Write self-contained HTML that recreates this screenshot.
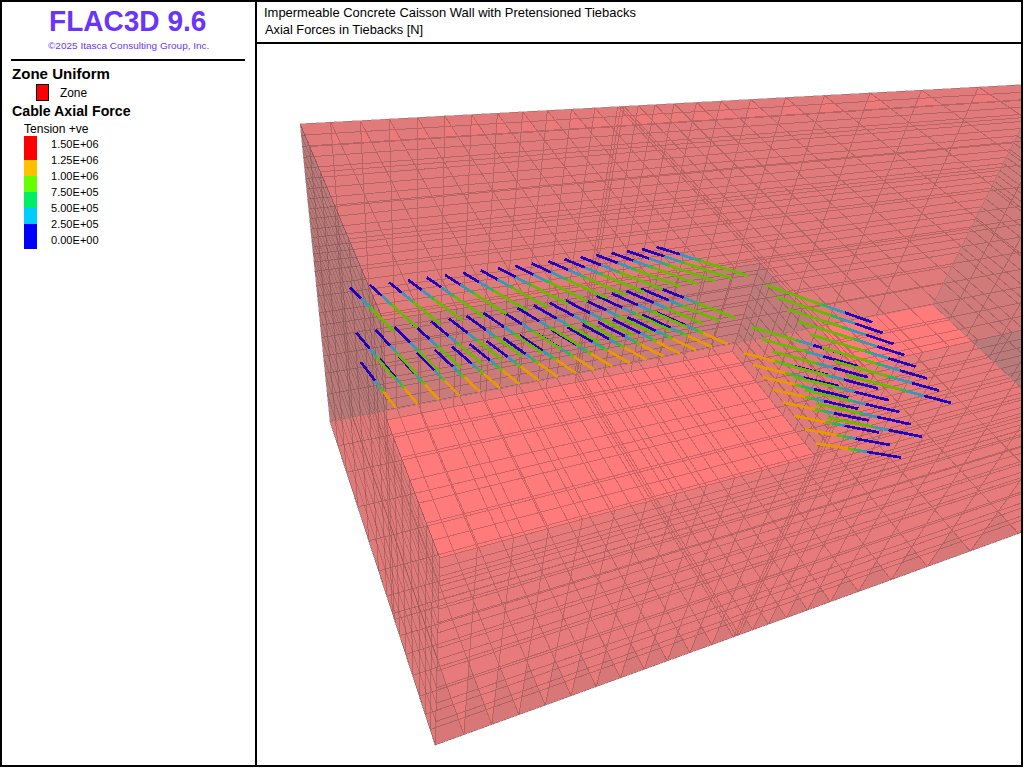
<!DOCTYPE html>
<html><head><meta charset="utf-8">
<style>
html,body{margin:0;padding:0;background:#fff;}
body{width:1024px;height:768px;position:relative;overflow:hidden;font-family:"Liberation Sans",sans-serif;}
.abs{position:absolute;white-space:nowrap;}
#frame{position:absolute;left:0;top:0;width:1019px;height:763px;border:2px solid #000;}
#vdiv{position:absolute;left:255px;top:0;width:2px;height:767px;background:#000;}
#hdiv{position:absolute;left:255px;top:42px;width:768px;height:2px;background:#000;}
#sep{position:absolute;left:11px;top:59px;width:234px;height:2px;background:#000;}
.t1{font-size:29px;font-weight:bold;color:#6a3cf0;}
.cp{font-size:10.5px;color:#6a3cf0;}
.h{font-size:14px;font-weight:bold;color:#000;}
.s{font-size:12px;color:#000;}
.lab{font-size:11.5px;color:#000;}
#view{position:absolute;left:0;top:0;}
</style></head><body>
<svg id="view" width="1024" height="768" viewBox="0 0 1024 768">
<defs><clipPath id="vp"><rect x="257" y="44" width="764" height="721"/></clipPath></defs>
<defs>
<clipPath id="e0"><polygon points="330.00,421.49 932.74,304.65 1043.16,83.50 300.09,123.85"/></clipPath>
<clipPath id="e1"><polygon points="435.19,745.17 1132.68,492.27 932.74,304.65 330.00,421.49"/></clipPath>
<clipPath id="e2"><polygon points="1132.68,492.27 932.74,304.65 1043.16,83.50 1328.77,261.65"/></clipPath>
</defs>
<g clip-path="url(#vp)">
<g clip-path="url(#e0)" shape-rendering="crispEdges">
<polygon points="383.01,320.06 1220.62,194.19 1043.16,83.50 300.09,123.85" fill="rgb(225,122,122)"/>
<polygon points="855.10,367.43 1328.77,261.65 1220.62,194.19 760.39,263.35" fill="rgb(225,122,122)"/>
<polygon points="435.19,745.17 330.00,421.49 300.09,123.85 383.01,320.06 386.80,420.03 439.68,557.94" fill="rgb(186,122,122)"/>
<polygon points="435.19,745.17 1132.68,492.27 1328.77,261.65 855.10,367.43 815.11,456.06 439.68,557.94" fill="rgb(201,122,122)"/>
<polygon points="439.68,557.94 815.11,456.06 732.35,351.46 386.80,420.03" fill="rgb(225,122,122)"/>
<polygon points="386.80,420.03 732.35,351.46 760.39,263.35 383.01,320.06" fill="rgb(201,122,122)"/>
<polygon points="815.11,456.06 732.35,351.46 760.39,263.35 855.10,367.43" fill="rgb(193,122,122)"/>
</g>
<g clip-path="url(#e1)" shape-rendering="crispEdges">
<polygon points="383.01,320.06 1220.62,194.19 1043.16,83.50 300.09,123.85" fill="rgb(255,122,122)"/>
<polygon points="855.10,367.43 1328.77,261.65 1220.62,194.19 760.39,263.35" fill="rgb(255,122,122)"/>
<polygon points="435.19,745.17 330.00,421.49 300.09,123.85 383.01,320.06 386.80,420.03 439.68,557.94" fill="rgb(223,122,122)"/>
<polygon points="435.19,745.17 1132.68,492.27 1328.77,261.65 855.10,367.43 815.11,456.06 439.68,557.94" fill="rgb(231,122,122)"/>
<polygon points="439.68,557.94 815.11,456.06 732.35,351.46 386.80,420.03" fill="rgb(255,122,122)"/>
<polygon points="386.80,420.03 732.35,351.46 760.39,263.35 383.01,320.06" fill="rgb(231,122,122)"/>
<polygon points="815.11,456.06 732.35,351.46 760.39,263.35 855.10,367.43" fill="rgb(223,122,122)"/>
</g>
<g clip-path="url(#e2)" shape-rendering="crispEdges">
<polygon points="383.01,320.06 1220.62,194.19 1043.16,83.50 300.09,123.85" fill="rgb(208,122,122)"/>
<polygon points="855.10,367.43 1328.77,261.65 1220.62,194.19 760.39,263.35" fill="rgb(208,122,122)"/>
<polygon points="435.19,745.17 330.00,421.49 300.09,123.85 383.01,320.06 386.80,420.03 439.68,557.94" fill="rgb(176,122,122)"/>
<polygon points="435.19,745.17 1132.68,492.27 1328.77,261.65 855.10,367.43 815.11,456.06 439.68,557.94" fill="rgb(184,122,122)"/>
<polygon points="439.68,557.94 815.11,456.06 732.35,351.46 386.80,420.03" fill="rgb(208,122,122)"/>
<polygon points="386.80,420.03 732.35,351.46 760.39,263.35 383.01,320.06" fill="rgb(184,122,122)"/>
<polygon points="815.11,456.06 732.35,351.46 760.39,263.35 855.10,367.43" fill="rgb(176,122,122)"/>
</g>
<path d="M330.66,122.19L332.38,145.07L341.11,144.51ZM360.37,120.58L361.51,143.18L371.64,142.52ZM389.29,119.01L389.87,141.33L401.31,140.59ZM417.42,117.48L417.48,139.54L430.15,138.72ZM444.80,115.99L444.37,137.79L458.20,136.89ZM471.45,114.55L470.56,136.09L485.49,135.12ZM497.42,113.13L496.09,134.43L512.05,133.39ZM522.73,111.76L520.97,132.81L537.92,131.71ZM547.39,110.42L545.23,131.23L563.10,130.07ZM571.44,109.12L568.90,129.69L587.64,128.47ZM594.89,107.84L592.00,128.19L611.57,126.92ZM617.77,106.60L614.54,126.72L634.88,125.40ZM620.88,106.43L617.60,126.53L638.05,125.20ZM623.98,106.26L620.65,126.33L641.20,124.99ZM638.30,105.48L634.77,125.41L655.79,124.04ZM655.07,104.57L651.30,124.33L672.85,122.93ZM674.14,103.54L670.10,123.11L692.25,121.67ZM696.62,102.32L692.28,121.67L715.11,120.18ZM721.03,100.99L716.36,120.10L739.91,118.57ZM750.76,99.38L745.72,118.19L770.08,116.61ZM785.82,97.47L780.35,115.94L805.63,114.30ZM824.41,95.38L818.50,113.46L844.73,111.76ZM870.11,92.90L863.71,110.52L890.96,108.75ZM921.62,90.10L914.71,107.20L943.00,105.37ZM978.51,87.01L971.10,103.54L1000.37,101.63ZM1043.16,83.50L1035.24,99.37L1065.45,97.40Z" fill="rgb(236,122,122)" shape-rendering="crispEdges"/>
<path d="M435.19,745.17L437.27,658.61L463.90,734.76ZM463.90,734.76L469.00,663.72L491.80,724.64ZM491.80,724.64L498.85,664.34L518.95,714.80ZM518.95,714.80L527.28,662.42L545.36,705.23ZM545.36,705.23L554.58,658.91L571.07,695.90ZM571.07,695.90L580.89,654.42L596.10,686.83ZM596.10,686.83L606.33,649.24L620.48,677.99ZM620.48,677.99L630.99,643.65L644.24,669.37ZM644.24,669.37L654.92,637.78L667.39,660.98ZM667.39,660.98L678.17,631.72L689.97,652.79ZM689.97,652.79L700.79,625.56L711.99,644.81ZM711.99,644.81L722.80,619.36L733.47,637.02ZM733.47,637.02L734.98,633.66L736.38,635.96ZM736.38,635.96L737.90,632.63L739.29,634.91ZM739.29,634.91L746.28,619.67L752.74,630.03ZM752.74,630.03L760.99,612.63L768.47,624.33ZM768.47,624.33L777.97,605.07L786.37,617.84ZM786.37,617.84L797.69,595.80L807.48,610.19ZM807.48,610.19L819.92,587.03L830.39,601.88ZM830.39,601.88L845.71,574.65L858.29,591.76ZM858.29,591.76L876.58,560.91L891.19,579.83ZM891.19,579.83L911.62,547.27L927.42,566.70ZM927.42,566.70L951.90,529.82L970.30,551.15ZM970.30,551.15L998.28,511.52L1018.64,533.62ZM1018.64,533.62L1049.96,491.92L1072.02,514.27ZM1072.02,514.27L1108.05,469.16L1132.68,492.27Z" fill="rgb(216,119,119)" shape-rendering="crispEdges" clip-path="url(#e1)"/>
<path d="M330.00,421.49L300.09,123.85M352.79,417.08L330.66,122.19M375.09,412.75L360.37,120.58M396.93,408.52L389.29,119.01M418.32,404.37L417.42,117.48M439.27,400.31L444.80,115.99M459.80,396.33L471.45,114.55M479.92,392.43L497.42,113.13M499.64,388.61L522.73,111.76M518.97,384.86L547.39,110.42M537.94,381.18L571.44,109.12M556.53,377.58L594.89,107.84M574.77,374.04L617.77,106.60M577.26,373.56L620.88,106.43M579.74,373.08L623.98,106.26M591.22,370.85L638.30,105.48M604.72,368.24L655.07,104.57M620.13,365.25L674.14,103.54M638.39,361.71L696.62,102.32M658.32,357.84L721.03,100.99M682.76,353.11L750.76,99.38M711.81,347.48L785.82,97.47M744.06,341.22L824.41,95.38M782.65,333.74L870.11,92.90M826.66,325.21L921.62,90.10M875.92,315.66L978.51,87.01M932.74,304.65L1043.16,83.50M330.00,421.49L932.74,304.65M327.27,394.25L943.69,282.72M325.17,373.38L951.95,266.18M323.42,356.01L958.75,252.56M321.55,337.41L965.94,238.15M320.33,325.21L970.62,228.78M319.07,312.70L975.38,219.24M317.41,296.15L981.63,206.73M316.33,285.45L985.63,198.71M314.91,271.26L990.90,188.16M313.98,262.04L994.31,181.34M313.17,254.00L997.26,175.43M312.49,247.21L999.74,170.46M311.52,237.56L1003.25,163.43M310.67,229.15L1006.29,157.34M309.63,218.74L1010.04,149.84M308.64,208.94L1013.54,142.82M307.64,198.97L1017.09,135.72M306.62,188.82L1020.68,128.53M305.58,178.48L1024.31,121.25M304.52,167.95L1027.99,113.88M303.45,157.23L1031.71,106.43M302.35,146.31L1035.48,98.88M301.23,135.19L1039.30,91.24M300.09,123.85L1043.16,83.50M435.19,745.17L1132.68,492.27M430.13,729.59L1123.84,483.97M425.16,714.30L1115.09,475.76M419.27,696.17L1104.62,465.94M412.51,675.37L1092.49,454.55M405.67,654.33L1080.07,442.90M399.64,635.78L1069.02,432.53M394.35,619.49L1059.21,423.33M392.40,613.49L1055.58,419.92M386.74,596.06L1044.96,409.95M378.54,570.85L1029.42,395.37M368.79,540.84L1010.63,377.74M357.75,506.87L988.99,357.43M346.53,472.35L966.58,336.40M337.91,445.82L949.05,319.95M330.00,421.49L932.74,304.65M435.19,745.17L330.00,421.49M463.90,734.76L352.79,417.08M491.80,724.64L375.09,412.75M518.95,714.80L396.93,408.52M545.36,705.23L418.32,404.37M571.07,695.90L439.27,400.31M596.10,686.83L459.80,396.33M620.48,677.99L479.92,392.43M644.24,669.37L499.64,388.61M667.39,660.98L518.97,384.86M689.97,652.79L537.94,381.18M711.99,644.81L556.53,377.58M733.47,637.02L574.77,374.04M736.38,635.96L577.26,373.56M739.29,634.91L579.74,373.08M752.74,630.03L591.22,370.85M768.47,624.33L604.72,368.24M786.37,617.84L620.13,365.25M807.48,610.19L638.39,361.71M830.39,601.88L658.32,357.84M858.29,591.76L682.76,353.11M891.19,579.83L711.81,347.48M927.42,566.70L744.06,341.22M970.30,551.15L782.65,333.74M1018.64,533.62L826.66,325.21M1072.02,514.27L875.92,315.66M1132.68,492.27L932.74,304.65M1132.68,492.27L932.74,304.65M1151.30,470.38L943.69,282.72M1165.46,453.72L951.95,266.18M1177.19,439.92L958.75,252.56M1189.69,425.23L965.94,238.15M1197.85,415.62L970.62,228.78M1206.20,405.81L975.38,219.24M1217.19,392.88L981.63,206.73M1224.27,384.55L985.63,198.71M1233.62,373.55L990.90,188.16M1239.69,366.42L994.31,181.34M1244.96,360.22L997.26,175.43M1249.41,354.99L999.74,170.46M1255.71,347.57L1003.25,163.43M1261.19,341.13L1006.29,157.34M1267.95,333.17L1010.04,149.84M1274.30,325.70L1013.54,142.82M1280.75,318.12L1017.09,135.72M1287.30,310.42L1020.68,128.53M1293.94,302.60L1024.31,121.25M1300.69,294.67L1027.99,113.88M1307.55,286.60L1031.71,106.43M1314.51,278.42L1035.48,98.88M1321.58,270.10L1039.30,91.24M1328.77,261.65L1043.16,83.50M1132.68,492.27L1328.77,261.65M1123.84,483.97L1315.54,253.40M1115.09,475.76L1302.52,245.27M1104.62,465.94L1287.00,235.59M1092.49,454.55L1269.12,224.44M1080.07,442.90L1250.93,213.10M1069.02,432.53L1234.82,203.05M1059.21,423.33L1220.62,194.19M1055.58,419.92L1215.37,190.91M1044.96,409.95L1200.08,181.37M1029.42,395.37L1177.84,167.51M1010.63,377.74L1151.19,150.88M988.99,357.43L1120.77,131.91M966.58,336.40L1089.60,112.47M949.05,319.95L1065.45,97.40M932.74,304.65L1043.16,83.50M855.10,367.43L1328.77,261.65M843.18,354.33L1315.54,253.40M831.53,341.52L1302.52,245.27M817.77,326.41L1287.00,235.59M802.09,309.17L1269.12,224.44M786.31,291.83L1250.93,213.10M772.48,276.63L1234.82,203.05M383.01,320.06L1220.62,194.19M380.33,313.70L1215.37,190.91M372.59,295.40L1200.08,181.37M361.57,269.32L1177.84,167.51M348.71,238.88L1151.19,150.88M334.46,205.18L1120.77,131.91M320.33,171.73L1089.60,112.47M309.68,146.55L1065.45,97.40M300.09,123.85L1043.16,83.50M383.01,320.06L300.09,123.85M420.70,314.39L330.66,122.19M457.04,308.93L360.37,120.58M492.13,303.66L389.29,119.01M526.01,298.57L417.42,117.48M558.76,293.65L444.80,115.99M590.42,288.89L471.45,114.55M621.05,284.29L497.42,113.13M650.71,279.83L522.73,111.76M679.42,275.52L547.39,110.42M707.25,271.33L571.44,109.12M734.23,267.28L594.89,107.84M760.39,263.35L617.77,106.60M858.87,366.59L620.88,106.43M862.62,365.75L623.98,106.26M879.90,361.89L638.30,105.48M900.00,357.41L655.07,104.57M922.68,352.34L674.14,103.54M949.21,346.42L696.62,102.32M977.71,340.05L721.03,100.99M1012.05,332.38L750.76,99.38M1052.01,323.46L785.82,97.47M1095.35,313.78L824.41,95.38M1145.80,302.51L870.11,92.90M1201.57,290.05L921.62,90.10M1261.86,276.59L978.51,87.01M1328.77,261.65L1043.16,83.50M435.19,745.17L439.68,557.94M430.13,729.59L432.94,540.39M425.16,714.30L426.39,523.28M419.27,696.17L418.68,503.17M412.51,675.37L409.91,480.31M405.67,654.33L401.14,457.42M399.64,635.78L393.47,437.43M394.35,619.49L383.01,320.06M392.40,613.49L380.33,313.70M386.74,596.06L372.59,295.40M378.54,570.85L361.57,269.32M368.79,540.84L348.71,238.88M357.75,506.87L334.46,205.18M346.53,472.35L320.33,171.73M337.91,445.82L309.68,146.55M330.00,421.49L300.09,123.85M435.19,745.17L1132.68,492.27M435.76,721.63L1151.30,470.38M436.20,703.28L1165.46,453.72M436.57,687.78L1177.19,439.92M436.97,670.98L1189.69,425.23M437.24,659.82L1197.85,415.62M437.51,648.27L1206.20,405.81M437.88,632.83L1217.19,392.88M438.12,622.74L1224.27,384.55M438.45,609.24L1233.62,373.55M438.66,600.38L1239.69,366.42M438.85,592.61L1244.96,360.22M439.00,586.00L1249.41,354.99M439.23,576.56L1255.71,347.57M439.43,568.27L1261.19,341.13M439.68,557.94L1267.95,333.17M819.19,447.03L1274.30,325.70M823.35,437.81L1280.75,318.12M827.60,428.39L1287.30,310.42M831.94,418.77L1293.94,302.60M836.37,408.95L1300.69,294.67M840.90,398.91L1307.55,286.60M845.53,388.65L1314.51,278.42M850.26,378.16L1321.58,270.10M855.10,367.43L1328.77,261.65M435.19,745.17L439.68,557.94M463.90,734.76L477.33,547.72M491.80,724.64L513.61,537.88M518.95,714.80L548.61,528.38M545.36,705.23L582.38,519.22M571.07,695.90L614.98,510.37M596.10,686.83L646.47,501.82M620.48,677.99L676.92,493.56M644.24,669.37L706.38,485.57M667.39,660.98L734.87,477.83M689.97,652.79L762.47,470.35M711.99,644.81L789.21,463.09M733.47,637.02L855.10,367.43M736.38,635.96L858.87,366.59M739.29,634.91L862.62,365.75M752.74,630.03L879.90,361.89M768.47,624.33L900.00,357.41M786.37,617.84L922.68,352.34M807.48,610.19L949.21,346.42M830.39,601.88L977.71,340.05M858.29,591.76L1012.05,332.38M891.19,579.83L1052.01,323.46M927.42,566.70L1095.35,313.78M970.30,551.15L1145.80,302.51M1018.64,533.62L1201.57,290.05M1072.02,514.27L1261.86,276.59M1132.68,492.27L1328.77,261.65M439.68,557.94L815.11,456.06M432.94,540.39L804.79,443.01M426.39,523.28L794.67,430.23M418.68,503.17L782.70,415.09M409.91,480.31L769.00,397.78M401.14,457.42L755.17,380.30M393.47,437.43L743.01,364.92M386.80,420.03L732.35,351.46M439.68,557.94L386.80,420.03M477.33,547.72L420.75,413.29M513.61,537.88L453.60,406.77M548.61,528.38L485.43,400.45M582.38,519.22L516.27,394.33M614.98,510.37L546.17,388.40M646.47,501.82L575.17,382.65M676.92,493.56L603.31,377.06M706.38,485.57L630.63,371.64M734.87,477.83L657.15,366.38M762.47,470.35L682.93,361.26M789.21,463.09L707.99,356.29M815.11,456.06L732.35,351.46M386.80,420.03L732.35,351.46M386.42,409.91L735.24,342.39M386.02,399.56L738.18,333.16M385.62,388.98L741.17,323.75M385.21,378.15L744.22,314.17M384.79,367.08L747.33,304.39M384.36,355.74L750.50,294.43M383.93,344.13L753.73,284.27M383.48,332.24L757.03,273.91M383.01,320.06L760.39,263.35M386.80,420.03L383.01,320.06M420.75,413.29L420.70,314.39M453.60,406.77L457.04,308.93M485.43,400.45L492.13,303.66M516.27,394.33L526.01,298.57M546.17,388.40L558.76,293.65M575.17,382.65L590.42,288.89M603.31,377.06L621.05,284.29M630.63,371.64L650.71,279.83M657.15,366.38L679.42,275.52M682.93,361.26L707.25,271.33M707.99,356.29L734.23,267.28M732.35,351.46L760.39,263.35M815.11,456.06L732.35,351.46M819.19,447.03L735.24,342.39M823.35,437.81L738.18,333.16M827.60,428.39L741.17,323.75M831.94,418.77L744.22,314.17M836.37,408.95L747.33,304.39M840.90,398.91L750.50,294.43M845.53,388.65L753.73,284.27M850.26,378.16L757.03,273.91M855.10,367.43L760.39,263.35M815.11,456.06L855.10,367.43M804.79,443.01L843.18,354.33M794.67,430.23L831.53,341.52M782.70,415.09L817.77,326.41M769.00,397.78L802.09,309.17M755.17,380.30L786.31,291.83M743.01,364.92L772.48,276.63M732.35,351.46L760.39,263.35" stroke="rgb(70,40,40)" stroke-opacity="0.27" stroke-width="1" fill="none" shape-rendering="crispEdges"/><path d="M435.19,745.17L330.00,421.49M435.76,721.63L327.27,394.25M436.20,703.28L325.17,373.38M436.57,687.78L323.42,356.01M436.97,670.98L321.55,337.41M437.24,659.82L320.33,325.21M437.51,648.27L319.07,312.70M437.88,632.83L317.41,296.15M438.12,622.74L316.33,285.45M438.45,609.24L314.91,271.26M438.66,600.38L313.98,262.04M438.85,592.61L313.17,254.00M439.00,586.00L312.49,247.21M439.23,576.56L311.52,237.56M439.43,568.27L310.67,229.15M439.68,557.94L309.63,218.74M386.42,409.91L308.64,208.94M386.02,399.56L307.64,198.97M385.62,388.98L306.62,188.82M385.21,378.15L305.58,178.48M384.79,367.08L304.52,167.95M384.36,355.74L303.45,157.23M383.93,344.13L302.35,146.31M383.48,332.24L301.23,135.19M383.01,320.06L300.09,123.85" stroke="rgb(70,40,40)" stroke-opacity="0.2" stroke-width="1" fill="none" shape-rendering="crispEdges"/>
<path d="M350.19,287.59L360.95,298.41M356.35,332.79L369.82,348.90M360.88,362.10L375.10,380.74M369.89,284.98L381.60,295.55M375.53,329.83L390.12,345.59M379.78,358.91L395.15,377.16M389.22,282.41L401.85,292.75M394.37,326.92L410.03,342.35M398.36,355.78L414.81,373.65M408.20,279.89L421.71,290.00M412.87,324.07L429.56,339.16M416.60,352.70L434.11,370.20M426.84,277.42L441.19,287.30M431.04,321.26L448.73,336.04M434.53,349.68L453.05,366.82M445.14,274.99L460.30,284.66M448.90,318.50L467.54,332.97M452.15,346.71L471.64,363.50M463.12,272.61L479.06,282.06M466.44,315.80L486.01,329.96M469.46,343.79L489.89,360.24M480.79,270.26L497.48,279.51M483.69,313.13L504.14,327.00M486.49,340.92L507.81,357.04M498.15,267.96L515.55,277.01M500.64,310.52L521.94,324.10M503.22,338.10L525.42,353.89M515.20,265.70L533.30,274.55M517.31,307.94L539.42,321.25M519.68,335.33L542.71,350.81M531.97,263.47L550.73,272.13M533.69,305.41L556.60,318.45M535.86,332.60L559.69,347.77M548.45,261.29L567.85,269.76M549.81,302.92L573.47,315.70M551.78,329.91L576.38,344.79M564.66,259.14L584.67,267.44M565.66,300.48L590.04,313.00M567.44,327.27L592.78,341.86M580.59,257.02L601.20,265.15M581.25,298.07L606.33,310.34M582.85,324.68L608.90,338.98M596.26,254.95L617.43,262.90M596.58,295.70L622.34,307.73M598.00,322.12L624.75,336.15M611.67,252.90L633.39,260.69M611.67,293.37L638.08,305.17M612.92,319.61L640.32,333.37M626.83,250.89L649.08,258.52M626.52,291.08L653.55,302.64M627.61,317.13L655.64,330.63M641.75,248.91L664.50,256.38M641.14,288.82L668.77,300.16M642.06,314.69L670.71,327.94M656.43,246.96L679.66,254.28M655.52,286.60L683.73,297.72M656.29,312.30L685.53,325.30M951.07,402.97L924.37,395.88M922.16,436.82L888.48,429.96M901.01,457.54L866.65,451.78M938.94,390.55L912.10,383.04M910.71,424.29L876.90,416.89M889.96,444.90L855.50,438.60M927.11,378.43L900.16,370.53M899.54,412.06L865.63,404.17M879.18,432.58L844.64,425.75M915.59,366.63L888.53,358.36M888.64,400.14L854.64,391.77M868.66,420.55L834.06,413.23M904.35,355.11L877.20,346.50M878.01,388.51L843.94,379.68M858.39,408.80L823.74,401.03M893.39,343.88L866.16,334.94M867.63,377.15L833.50,367.90M848.37,397.34L813.68,389.13M882.70,332.92L855.39,323.67M857.50,366.06L823.32,356.42M838.58,386.14L803.86,377.52M872.26,322.22L844.90,312.68M847.60,355.23L813.38,345.21M829.01,375.21L794.29,366.19" stroke="rgb(34,0,190)" stroke-width="2.7" fill="none" shape-rendering="crispEdges"/><path d="M360.95,298.41L367.78,305.27M369.82,348.90L375.06,355.17M375.10,380.74L378.65,385.40M381.60,295.55L389.02,302.25M390.12,345.59L395.79,351.72M395.15,377.16L398.98,381.72M401.85,292.75L409.84,299.29M410.03,342.35L416.12,348.34M414.81,373.65L418.92,378.11M421.71,290.00L430.25,296.39M429.56,339.16L436.05,345.02M434.11,370.20L438.47,374.56M441.19,287.30L450.26,293.55M448.73,336.04L455.60,341.77M453.05,366.82L457.66,371.09M460.30,284.66L469.88,290.76M467.54,332.97L474.77,338.58M471.64,363.50L476.49,367.68M479.06,282.06L489.12,288.02M486.01,329.96L493.59,335.45M489.89,360.24L494.97,364.33M497.48,279.51L508.00,285.34M504.14,327.00L512.06,332.37M507.81,357.04L513.12,361.04M515.55,277.01L526.52,282.71M521.94,324.10L530.18,329.36M525.42,353.89L530.93,357.82M533.30,274.55L544.70,280.12M539.42,321.25L547.97,326.39M542.71,350.81L548.42,354.65M550.73,272.13L562.54,277.58M556.60,318.45L565.44,323.49M559.69,347.77L565.60,351.54M567.85,269.76L580.06,275.09M573.47,315.70L582.60,320.63M576.38,344.79L582.48,348.48M584.67,267.44L597.25,272.65M590.04,313.00L599.45,317.83M592.78,341.86L599.06,345.48M601.20,265.15L614.14,270.25M606.33,310.34L616.00,315.07M608.90,338.98L615.35,342.52M617.43,262.90L630.72,267.89M622.34,307.73L632.27,312.37M624.75,336.15L631.36,339.62M633.39,260.69L647.02,265.58M638.08,305.17L648.25,309.71M640.32,333.37L647.10,336.77M649.08,258.52L663.02,263.30M653.55,302.64L663.95,307.09M655.64,330.63L662.57,333.97M664.50,256.38L678.75,261.06M668.77,300.16L679.39,304.52M670.71,327.94L677.79,331.22M679.66,254.28L694.21,258.87M683.73,297.72L694.57,302.00M685.53,325.30L692.74,328.51M924.37,395.88L907.78,391.47M888.48,429.96L875.64,427.34M866.65,451.78L860.60,450.76M912.10,383.04L895.44,378.37M876.90,416.89L864.03,414.07M855.50,438.60L849.44,437.49M900.16,370.53L883.43,365.63M865.63,404.17L852.72,401.16M844.64,425.75L838.57,424.55M888.53,358.36L871.75,353.23M854.64,391.77L841.71,388.58M834.06,413.23L827.98,411.95M877.20,346.50L860.37,341.16M843.94,379.68L830.99,376.33M823.74,401.03L817.66,399.67M866.16,334.94L849.29,329.40M833.50,367.90L820.53,364.39M813.68,389.13L807.60,387.69M855.39,323.67L838.50,317.95M823.32,356.42L810.35,352.76M803.86,377.52L797.78,376.01M844.90,312.68L827.98,306.78M813.38,345.21L800.41,341.41M794.29,366.19L788.20,364.61" stroke="rgb(51,153,190)" stroke-width="2.7" fill="none" shape-rendering="crispEdges"/><path d="M367.78,305.27L370.74,308.26M375.06,355.17L377.06,357.57M378.65,385.40L381.56,389.20M389.02,302.25L392.25,305.17M395.79,351.72L397.96,354.06M398.98,381.72L402.11,385.44M409.84,299.29L413.31,302.14M416.12,348.34L418.44,350.63M418.92,378.11L422.27,381.75M430.25,296.39L433.96,299.17M436.05,345.02L438.52,347.26M438.47,374.56L442.04,378.12M450.26,293.55L454.20,296.26M455.60,341.77L458.21,343.95M457.66,371.09L461.43,374.57M469.88,290.76L474.03,293.41M474.77,338.58L477.53,340.71M476.49,367.68L480.45,371.09M489.12,288.02L493.49,290.61M493.59,335.45L496.48,337.54M494.97,364.33L499.12,367.67M508.00,285.34L512.57,287.87M512.06,332.37L515.07,334.42M513.12,361.04L517.44,364.31M526.52,282.71L531.28,285.18M530.18,329.36L533.32,331.36M530.93,357.82L535.42,361.02M544.70,280.12L549.64,282.54M547.97,326.39L551.23,328.35M548.42,354.65L553.08,357.78M562.54,277.58L567.66,279.95M565.44,323.49L568.81,325.40M565.60,351.54L570.42,354.60M580.06,275.09L585.34,277.40M582.60,320.63L586.07,322.51M582.48,348.48L587.45,351.48M597.25,272.65L602.70,274.91M599.45,317.83L603.03,319.66M599.06,345.48L604.17,348.42M614.14,270.25L619.74,272.46M616.00,315.07L619.68,316.87M615.35,342.52L620.61,345.41M630.72,267.89L636.47,270.05M632.27,312.37L636.04,314.13M631.36,339.62L636.75,342.45M647.02,265.58L652.91,267.69M648.25,309.71L652.11,311.43M647.10,336.77L652.62,339.54M663.02,263.30L669.05,265.37M663.95,307.09L667.91,308.78M662.57,333.97L668.21,336.69M678.75,261.06L684.91,263.09M679.39,304.52L683.43,306.18M677.79,331.22L683.55,333.88M694.21,258.87L700.50,260.85M694.57,302.00L698.69,303.62M692.74,328.51L698.62,331.12M907.78,391.47L900.63,389.57M875.64,427.34L870.77,426.34M860.60,450.76L854.02,449.66M895.44,378.37L888.27,376.37M864.03,414.07L859.15,413.00M849.44,437.49L842.85,436.28M883.43,365.63L876.24,363.52M852.72,401.16L847.83,400.02M838.57,424.55L831.97,423.25M871.75,353.23L864.53,351.03M841.71,388.58L836.82,387.38M827.98,411.95L821.38,410.55M860.37,341.16L853.14,338.87M830.99,376.33L826.09,375.06M817.66,399.67L811.05,398.18M849.29,329.40L842.05,327.02M820.53,364.39L815.63,363.07M807.60,387.69L800.98,386.13M838.50,317.95L831.25,315.49M810.35,352.76L805.44,351.37M797.78,376.01L791.17,374.37M827.98,306.78L820.72,304.25M800.41,341.41L795.50,339.97M788.20,364.61L781.59,362.89" stroke="rgb(34,187,85)" stroke-width="2.7" fill="none" shape-rendering="crispEdges"/><path d="M370.74,308.26L393.89,331.54M377.06,357.57L395.20,379.26M381.56,389.20L383.76,392.09M392.25,305.17L417.38,327.86M397.96,354.06L417.56,375.25M402.11,385.44L404.49,388.26M413.31,302.14L440.34,324.27M418.44,350.63L439.45,371.31M422.27,381.75L424.81,384.50M433.96,299.17L462.80,320.75M438.52,347.26L460.87,367.47M442.04,378.12L444.73,380.82M454.20,296.26L484.77,317.31M458.21,343.95L481.85,363.70M461.43,374.57L464.28,377.21M474.03,293.41L506.26,313.95M477.53,340.71L502.40,360.01M480.45,371.09L483.45,373.67M493.49,290.61L527.29,310.65M496.48,337.54L522.53,356.39M499.12,367.67L502.25,370.19M512.57,287.87L547.88,307.43M515.07,334.42L542.25,352.85M517.44,364.31L520.71,366.78M531.28,285.18L568.03,304.27M533.32,331.36L561.57,349.38M535.42,361.02L538.82,363.43M549.64,282.54L587.77,301.18M551.23,328.35L580.52,345.98M553.08,357.78L556.60,360.15M567.66,279.95L607.11,298.16M568.81,325.40L599.09,342.64M570.42,354.60L574.06,356.92M585.34,277.40L626.05,295.19M586.07,322.51L617.30,339.37M587.45,351.48L591.20,353.76M602.70,274.91L644.61,292.28M603.03,319.66L635.16,336.16M604.17,348.42L608.04,350.64M619.74,272.46L662.81,289.43M619.68,316.87L652.68,333.01M620.61,345.41L624.58,347.59M636.47,270.05L680.64,286.64M636.04,314.13L669.87,329.92M636.75,342.45L640.82,344.59M652.91,267.69L698.13,283.90M652.11,311.43L686.74,326.89M652.62,339.54L656.79,341.64M669.05,265.37L715.28,281.22M667.91,308.78L703.29,323.92M668.21,336.69L672.47,338.74M684.91,263.09L732.10,278.58M683.43,306.18L719.55,321.00M683.55,333.88L687.89,335.89M700.50,260.85L748.60,276.00M698.69,303.62L735.50,318.14M698.62,331.12L703.05,333.09M900.63,389.57L846.50,375.18M870.77,426.34L827.62,417.54M854.02,449.66L847.67,448.59M888.27,376.37L833.99,361.18M859.15,413.00L815.93,403.55M842.85,436.28L836.49,435.12M876.24,363.52L821.85,347.59M847.83,400.02L804.56,389.94M831.97,423.25L825.61,421.99M864.53,351.03L810.07,334.39M836.82,387.38L793.52,376.72M821.38,410.55L815.01,409.21M853.14,338.87L798.62,321.57M826.09,375.06L782.78,363.85M811.05,398.18L804.68,396.76M842.05,327.02L787.49,309.11M815.63,363.07L772.33,351.34M800.98,386.13L794.61,384.62M831.25,315.49L776.67,297.00M805.44,351.37L762.15,339.16M791.17,374.37L784.80,372.78M820.72,304.25L766.15,285.22M795.50,339.97L752.25,327.30M781.59,362.89L775.23,361.24" stroke="rgb(102,187,0)" stroke-width="2.7" fill="none" shape-rendering="crispEdges"/><path d="M383.76,392.09L395.99,408.12M404.49,388.26L417.67,403.92M424.81,384.50L438.90,399.81M444.73,380.82L459.71,395.78M464.28,377.21L480.08,391.84M483.45,373.67L500.06,387.97M502.25,370.19L519.63,384.18M520.71,366.78L538.82,380.47M538.82,363.43L557.64,376.82M556.60,360.15L576.10,373.25M574.06,356.92L594.20,369.75M591.20,353.76L611.96,366.31M608.04,350.64L629.39,362.94M624.58,347.59L646.50,359.62M640.82,344.59L663.29,356.37M656.79,341.64L679.77,353.18M672.47,338.74L695.96,350.05M687.89,335.89L711.86,346.97M703.05,333.09L727.48,343.95M847.67,448.59L816.13,443.30M836.49,435.12L804.93,429.34M825.61,421.99L794.03,415.75M815.01,409.21L783.43,402.54M804.68,396.76L773.11,389.67M794.61,384.62L763.06,377.15M784.80,372.78L753.27,364.95M775.23,361.24L743.74,353.06" stroke="rgb(230,154,0)" stroke-width="2.7" fill="none" shape-rendering="crispEdges"/>
</g>
</svg>
<div id="frame"></div><div id="vdiv"></div><div id="hdiv"></div><div id="sep"></div>
<div class="abs" style="left:49.40px;top:3px;font-size:30.4px;font-weight:bold;color:#6a35fa;transform:scaleX(0.9226);transform-origin:0 0;">FLAC3D 9.6</div>
<div class="abs" style="left:47.77px;top:40px;font-size:9.9px;color:#6a35fa;transform:scaleX(1.0128);transform-origin:0 0;">©2025 Itasca Consulting Group, Inc.</div>
<div class="abs" style="left:12.40px;top:66px;font-size:14.2px;font-weight:bold;color:#000;transform:scaleX(1.0615);transform-origin:0 0;">Zone Uniform</div>
<div class="abs" style="left:36px;top:84px;width:11px;height:15px;background:#f00;border:1px solid #000;"></div>
<div class="abs" style="left:60.00px;top:86px;font-size:12.0px;color:#000;transform:scaleX(0.9889);transform-origin:0 0;">Zone</div>
<div class="abs" style="left:12.11px;top:103px;font-size:14.4px;font-weight:bold;color:#000;transform:scaleX(0.9866);transform-origin:0 0;">Cable Axial Force</div>
<div class="abs" style="left:24.20px;top:122px;font-size:12.4px;color:#000;transform:scaleX(0.9712);transform-origin:0 0;">Tension +ve</div>
<div class="abs" style="left:24px;top:136px;width:13px;height:24px;background:#ff0000;"></div>
<div class="abs" style="left:24px;top:160px;width:13px;height:16px;background:#ffc000;"></div>
<div class="abs" style="left:24px;top:176px;width:13px;height:16px;background:#66ff00;"></div>
<div class="abs" style="left:24px;top:192px;width:13px;height:16px;background:#00ee66;"></div>
<div class="abs" style="left:24px;top:208px;width:13px;height:16px;background:#00ccff;"></div>
<div class="abs" style="left:24px;top:224px;width:13px;height:25px;background:#0000ff;"></div>
<div class="abs" style="left:50.56px;top:137px;font-size:11.8px;color:#000;transform:scaleX(0.9367);transform-origin:0 0;">1.50E+06</div>
<div class="abs" style="left:50.56px;top:153px;font-size:11.8px;color:#000;transform:scaleX(0.9367);transform-origin:0 0;">1.25E+06</div>
<div class="abs" style="left:50.56px;top:169px;font-size:11.8px;color:#000;transform:scaleX(0.9367);transform-origin:0 0;">1.00E+06</div>
<div class="abs" style="left:50.56px;top:185px;font-size:11.8px;color:#000;transform:scaleX(0.9367);transform-origin:0 0;">7.50E+05</div>
<div class="abs" style="left:50.56px;top:201px;font-size:11.8px;color:#000;transform:scaleX(0.9367);transform-origin:0 0;">5.00E+05</div>
<div class="abs" style="left:50.56px;top:217px;font-size:11.8px;color:#000;transform:scaleX(0.9367);transform-origin:0 0;">2.50E+05</div>
<div class="abs" style="left:50.56px;top:233px;font-size:11.8px;color:#000;transform:scaleX(0.9367);transform-origin:0 0;">0.00E+00</div>
<div class="abs" style="left:263.74px;top:6px;font-size:12.2px;color:#000;transform:scaleX(1.0632);transform-origin:0 0;">Impermeable Concrete Caisson Wall with Pretensioned Tiebacks</div>
<div class="abs" style="left:264.80px;top:23px;font-size:12.4px;color:#000;transform:scaleX(1.0342);transform-origin:0 0;">Axial Forces in Tiebacks [N]</div>
</body></html>
